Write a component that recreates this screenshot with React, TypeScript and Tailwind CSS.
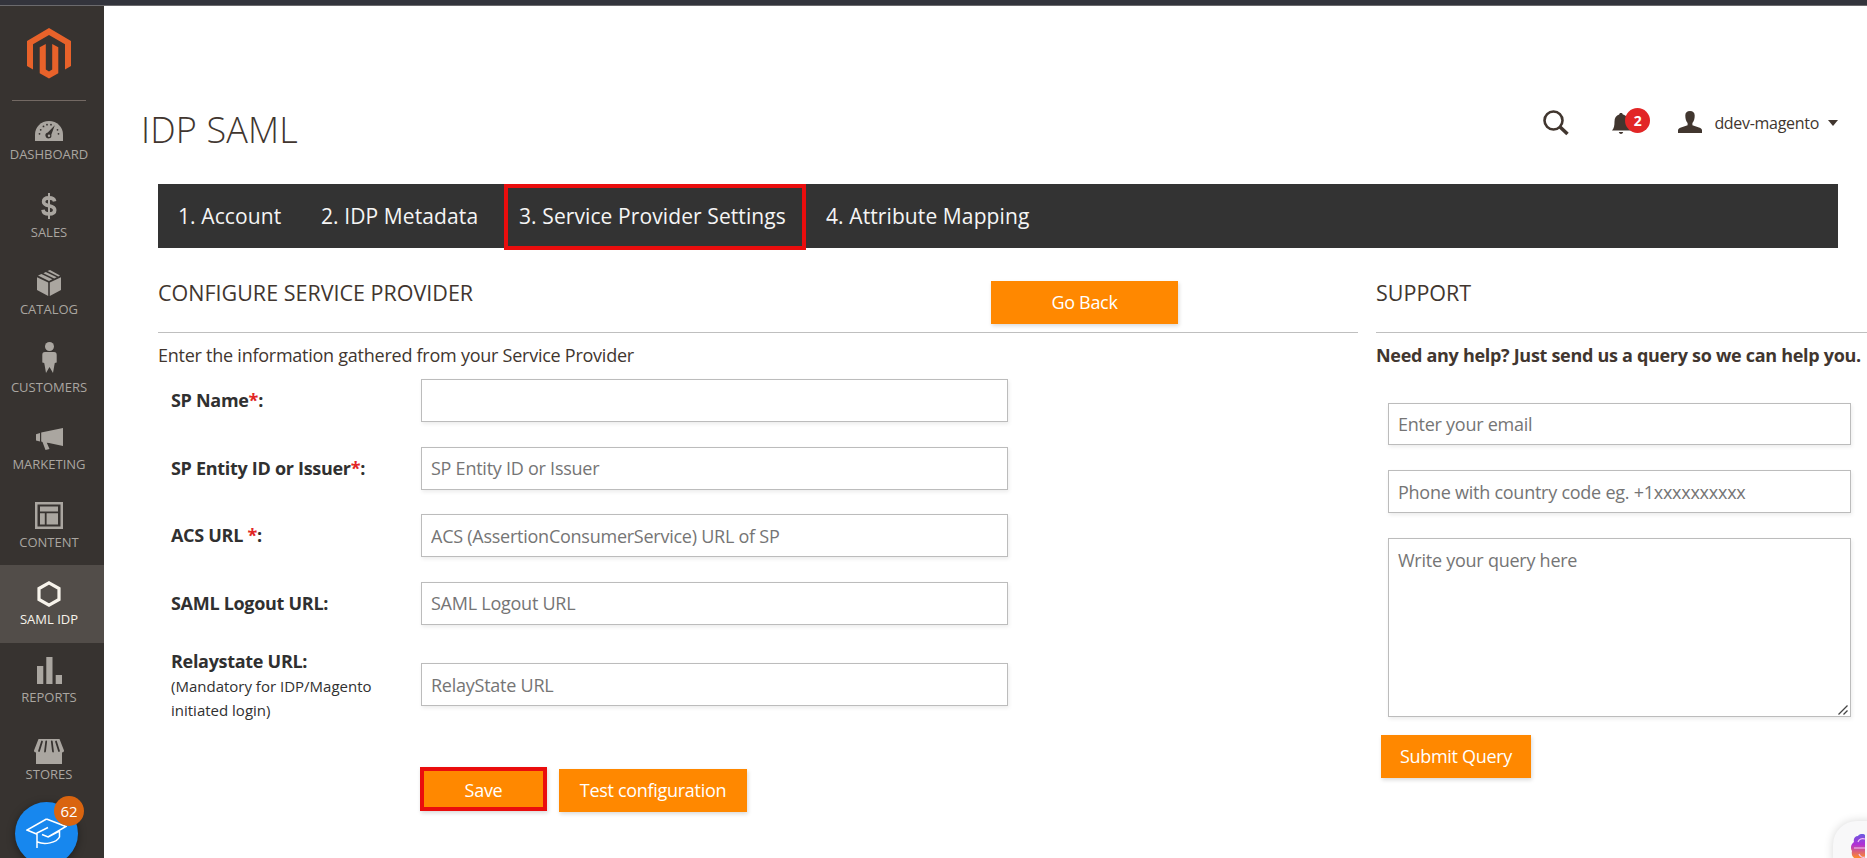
import type { ReactNode } from "react";

function MagentoLogo() {
  return (
    <svg width="44" height="51" viewBox="0 0 44 51" fill="#e8622a">
      <path d="M22 0 44 13v25l-6 3.4V16.2L22 7 6 16.2v25.2L0 38V13z" />
      <path d="M12.7 19.3 18.8 16v25.6L22 43.6l3.2-2V16l6.1 3.3v26L22 50.6l-9.3-5.3z" />
    </svg>
  );
}

function DashboardIcon() {
  return (
    <svg className="relative top-[2px]" width="28" height="20" viewBox="0 0 28 20" fill="currentColor">
      <path d="M14 0C6 0 0 6 0 13.5V20h28v-6.500C28 6 22 0 14 0z" />
      <g fill="#373330">
        <circle cx="4.500" cy="12.800" r="0.900" />
        <circle cx="5.700" cy="8.800" r="0.900" />
        <circle cx="8.500" cy="5.400" r="0.900" />
        <circle cx="12" cy="3.700" r="0.900" />
        <circle cx="16" cy="3.700" r="0.900" />
        <circle cx="22.500" cy="8.800" r="0.900" />
        <circle cx="23.500" cy="12.800" r="0.900" />
        <path d="M19.800 4.200 12.800 11.500a3 3 0 1 0 3.500 2.200z" />
      </g>
      <circle cx="14" cy="14.700" r="1.200" />
    </svg>
  );
}

function SalesIcon() {
  return (
    <svg className="relative -top-[1px]" width="16" height="26" viewBox="0 0 16 26" fill="none" stroke="currentColor">
      <path
        strokeWidth="3.600"
        d="M13.600 8.400C13.200 6 11.200 4.900 8 4.900c-3.300 0-5.400 1.300-5.400 3.800C2.600 14.500 13.700 11 13.700 17c0 2.700-2.300 4-5.700 4-3.500 0-5.700-1.400-6-4.300"
      />
      <path strokeWidth="2" d="M8 0v26" />
    </svg>
  );
}

function CatalogIcon() {
  return (
    <svg className="relative -top-[1px]" width="24" height="26" viewBox="0 0 24 26" fill="currentColor">
      <path d="M0 7.300 11.200 12.500V26L0 20zM24 7.300 12.800 12.500V26L24 20z" />
      <path d="M1 5.600 4.400 4.100 15.300 9.200 12 10.900zM6.400 3.200 8.800 2 19.700 7.200 17.200 8.400zM10.500 1.100 13 0l10 5.600-1.700.8z" />
    </svg>
  );
}

function CustomersIcon() {
  return (
    <svg className="relative -top-[4px]" width="15" height="31" viewBox="0 0 15 31" fill="currentColor">
      <circle cx="7.500" cy="4.500" r="4.500" />
      <path d="M3 10h9c2 0 2.700 1.200 2.700 3v7.500l-1.900.4-.5 2.600L11 31l-3.500-6L4 31l-1.300-7.500-.5-2.600-1.900-.4V13c0-1.800.7-3 2.700-3z" />
    </svg>
  );
}

function MarketingIcon() {
  return (
    <svg width="27" height="22" viewBox="0 0 27 22" fill="currentColor">
      <path d="M0 6.200 4 5v8.500L0 12.400zM5.200 4.600 27 0v18l-14-3-2.200-.300 2.700 6.300-4 1-3-8-1.300-.5z" />
    </svg>
  );
}

function ContentIcon() {
  return (
    <svg className="relative -top-[1px]" width="28" height="27" viewBox="0 0 28 27" fill="currentColor">
      <path fillRule="evenodd" d="M0 0h28v27H0zM2.500 2.500v22h23v-22z" />
      <path d="M5 4.500h18v5H5zM5 11.300h4.800V22.500H5zM11.600 11.300H23V22.500H11.600z" />
    </svg>
  );
}

function HexagonIcon() {
  return (
    <svg width="24" height="26" viewBox="0 0 24 26" fill="none" stroke="currentColor" strokeWidth="3.200">
      <path d="M12 1.900 22 7.500v11L12 24.100 2 18.500v-11z" />
    </svg>
  );
}

function ReportsIcon() {
  return (
    <svg className="relative -top-[1px]" width="25" height="27" viewBox="0 0 25 27" fill="currentColor">
      <path d="M0 9h6.300v18H0zM9.300 0h6.200v27H9.300zM18.700 18H25v9h-6.300z" />
    </svg>
  );
}

function StoresIcon() {
  return (
    <svg className="relative top-[2px]" width="30" height="25" viewBox="0 0 30 25" fill="currentColor">
      <path d="M4.500 0h21L30 11.500c0 1.200-.7 2-2 2V25H2V13.500c-1.300 0-2-.8-2-2z" />
      <path
        d="M8 2.500 5 12M12.200 2.500 11 12.500M17.800 2.500 19 12.500M22 2.500 25 12"
        stroke="#373330"
        strokeWidth="1.800"
        strokeLinecap="round"
      />
    </svg>
  );
}

const menu: { label: string; icon: ReactNode; active?: boolean }[] = [
  { label: "DASHBOARD", icon: <DashboardIcon /> },
  { label: "SALES", icon: <SalesIcon /> },
  { label: "CATALOG", icon: <CatalogIcon /> },
  { label: "CUSTOMERS", icon: <CustomersIcon /> },
  { label: "MARKETING", icon: <MarketingIcon /> },
  { label: "CONTENT", icon: <ContentIcon /> },
  { label: "SAML IDP", icon: <HexagonIcon />, active: true },
  { label: "REPORTS", icon: <ReportsIcon /> },
  { label: "STORES", icon: <StoresIcon /> },
];

function Sidebar() {
  return (
    <aside className="relative flex w-[104px] shrink-0 flex-col bg-[#373330]">
      <div className="flex h-[94px] flex-col items-center pr-[6px] pt-[22px]">
        <MagentoLogo />
      </div>
      <div className="ml-3 h-px w-[74px] shrink-0 bg-[#736963]" />
      <nav className="-mt-px">
        {menu.map((item) => (
          <a
            key={item.label}
            href="#"
            className={
              item.active
                ? "flex h-[77.5px] flex-col items-center bg-[#524d49] pr-[6px] pt-[11px] text-[#f7f3eb]"
                : "flex h-[77.5px] flex-col items-center pr-[6px] pt-[11px] text-[#aaa6a0]"
            }
          >
            <span className="flex h-[36px] items-center justify-center">{item.icon}</span>
            <span className="-mt-1 text-[13px] leading-[22px]">{item.label}</span>
          </a>
        ))}
      </nav>

      <div className="absolute left-[15px] top-[796px] flex h-[63px] w-[63px] items-center justify-center rounded-full bg-[#1787ee] shadow-[0_2px_8px_rgba(0,0,0,0.4)]">
        <svg width="41" height="32" viewBox="0 0 41 32" fill="none" stroke="white" strokeWidth="1.500">
          <path d="M20.500 1 40 8.500 22 19l-6-2.500M20.500 1 1 12l9.500 4M22 9.500 11 15v15M33.500 13v6c-3 6-15 8-22 5M22 19l11.500-6" />
        </svg>
      </div>
      <div className="absolute left-[54px] top-[790px] flex h-[30px] w-[30px] items-center justify-center rounded-full bg-[#d9640f] text-[15px] text-white">
        62
      </div>
    </aside>
  );
}

function Header() {
  return (
    <header className="flex h-[178px] items-start justify-between pl-[37px] pr-[29px]">
      <h1 className="mt-[99px] text-[36px] font-light leading-[50px] tracking-[0.15px] text-[#41362f]">IDP SAML</h1>
      <div className="mt-[101px] flex h-8 items-center text-[#41362f]">
        <svg width="26" height="26" viewBox="0 0 26 26" fill="none" stroke="currentColor">
          <circle cx="10.500" cy="10.500" r="9" strokeWidth="2.600" />
          <path d="M16.800 16.800 24.500 24" strokeWidth="3.600" />
        </svg>
        <div className="relative ml-[43px] w-[38px]">
          <svg width="20" height="21" viewBox="0 0 20 21" fill="currentColor">
            <path d="M9 0c1.200 0 1.800.7 1.800 1.500C14.200 2.200 16 5 16 8.500c0 4 1 7 3 9H0c2-2 2.500-5 2.500-9 0-3.500 1.600-6.300 4.700-7C7.200.7 7.800 0 9 0zM6.800 19h4.400c-.4 1.300-1.200 2-2.200 2s-1.800-.7-2.200-2z" />
          </svg>
          <span className="absolute -top-[5px] left-[13px] flex h-[25px] w-[25px] items-center justify-center rounded-full bg-[#e22626] text-[14px] font-bold text-white">
            2
          </span>
        </div>
        <svg className="-mt-[2px] ml-[28px]" width="24" height="22" viewBox="0 0 24 22" fill="currentColor">
          <path d="M12 0c3 0 4.700 1.500 4.700 4.500 0 3.500-.7 5.500-2.300 7.500v2.200l6.600 2.300c2 .7 3 1.500 3 3V22H0v-2.500c0-1.500 1-2.300 3-3l6.600-2.300V12C8 10 7.300 8 7.300 4.500 7.300 1.500 9 0 12 0z" />
        </svg>
        <span className="ml-3 text-[16px] tracking-[-0.3px]">ddev-magento</span>
        <svg className="ml-[9px]" width="10" height="6" viewBox="0 0 10 6" fill="currentColor">
          <path d="M0 0h10L5 6z" />
        </svg>
      </div>
    </header>
  );
}

function Tabs() {
  return (
    <div className="ml-[54px] mr-[29px] flex h-16 bg-[#333333] text-[21px] leading-[65px] tracking-[0.1px] text-[#f5f5f5]">
      <a href="#" className="ml-5 w-[143px]">1. Account</a>
      <a href="#" className="w-[183px]">2. IDP Metadata</a>
      <a
        href="#"
        className="h-[66px] w-[302px] border-4 border-[#ea0d0d] pl-[11px] leading-[57px]"
      >
        3. Service Provider Settings
      </a>
      <a href="#" className="ml-5">4. Attribute Mapping</a>
    </div>
  );
}

function Button({ children, className }: { children: ReactNode; className: string }) {
  return (
    <button
      className={`flex items-center justify-center bg-[#ff8800] text-[18px] tracking-[-0.3px] text-white shadow-[1px_2px_4px_rgba(0,0,0,0.15)] ${className}`}
    >
      {children}
    </button>
  );
}

const inputClass =
  "block border border-[#bcbcbc] bg-white px-[9px] text-[18px] tracking-[-0.25px] text-[#333] shadow-[1px_2px_4px_rgba(0,0,0,0.08)] outline-none placeholder:text-[#757575]";

const fields = [
  { id: "sp_name", label: "SP Name", required: true, placeholder: "" },
  { id: "sp_entity", label: "SP Entity ID or Issuer", required: true, placeholder: "SP Entity ID or Issuer" },
  { id: "acs_url", label: "ACS URL ", required: true, placeholder: "ACS (AssertionConsumerService) URL of SP" },
  { id: "logout_url", label: "SAML Logout URL", required: false, placeholder: "SAML Logout URL" },
];

function ProviderForm() {
  return (
    <section className="w-[1200px] shrink-0">
      <div className="flex h-[85px] border-b border-[#bfbfbf]">
        <h2 className="w-[833px] pt-[30px] text-[21.5px] font-medium leading-[30px]">
          CONFIGURE SERVICE PROVIDER
        </h2>
        <Button className="mt-[33px] h-[43px] w-[187px]">Go Back</Button>
      </div>
      <p className="pt-[9px] text-[18px] leading-[26px] tracking-[-0.25px]">
        Enter the information gathered from your Service Provider
      </p>
      <form className="pl-[13px] pt-[11px]">
        {fields.map((field) => (
          <div key={field.id} className="mb-[24.6px] flex h-[43px]">
            <label
              htmlFor={field.id}
              className="w-[250px] whitespace-pre text-[18px] font-bold leading-[42px] tracking-[-0.3px] text-[#303030]"
            >
              {field.label}
              {field.required && <span className="text-[#e22626]">*</span>}:
            </label>
            <input id={field.id} placeholder={field.placeholder} className={`h-[43px] w-[587px] ${inputClass}`} />
          </div>
        ))}
        <div className="flex h-[97px]">
          <label htmlFor="relaystate" className="w-[250px] pr-10 text-[#303030]">
            <b className="block text-[18px] font-bold leading-[25px] tracking-[-0.3px]">Relaystate URL:</b>
            <span className="block whitespace-nowrap text-[15px] leading-[24px]">
              (Mandatory for IDP/Magento
              <br />
              initiated login)
            </span>
          </label>
          <input
            id="relaystate"
            placeholder="RelayState URL"
            className={`mt-[14px] h-[43px] w-[587px] ${inputClass}`}
          />
        </div>
        <div className="ml-[249px] mt-[21px] flex items-start">
          <Button className="h-[44px] w-[127px] border-4 border-[#ea0d0d] pt-[2px]">Save</Button>
          <Button className="ml-3 mt-[2px] h-[43px] w-[188px]">Test configuration</Button>
        </div>
      </form>
    </section>
  );
}

function Support() {
  return (
    <section className="ml-[18px] w-[520px] shrink-0">
      <div className="h-[85px] border-b border-[#bfbfbf]">
        <h2 className="pt-[30px] text-[21.5px] font-medium leading-[30px]">SUPPORT</h2>
      </div>
      <p className="whitespace-nowrap pt-[9px] text-[18px] font-bold leading-[26px] tracking-[-0.3px]">
        Need any help? Just send us a query so we can help you.
      </p>
      <div className="pl-3 pt-[35px]">
        <input placeholder="Enter your email" className={`h-[42px] w-[463px] ${inputClass}`} />
        <input
          placeholder="Phone with country code eg. +1xxxxxxxxxx"
          className={`mt-[25px] h-[43px] w-[463px] ${inputClass}`}
        />
        <div className="relative mt-[25px] w-[463px]">
          <textarea
            placeholder="Write your query here"
            className={`h-[179px] w-[463px] resize-none py-[8px] leading-[26px] ${inputClass}`}
          />
          <svg
            className="absolute bottom-[2px] right-[3px]"
            width="10"
            height="10"
            viewBox="0 0 10 10"
            stroke="#444"
            strokeWidth="1.300"
          >
            <path d="M0.500 9.500 9.500 0.500M5.500 9.500l4-4" />
          </svg>
        </div>
      </div>
      <Button className="ml-[5px] mt-[18px] h-[43px] w-[150px]">Submit Query</Button>
    </section>
  );
}

function ChatWidget() {
  return (
    <div className="absolute left-[1833px] top-[821px] h-[60px] w-[60px] rounded-[24px] bg-[#f8f8f9] pl-[18px] pt-[13px] shadow-[0_0_10px_rgba(0,0,0,0.16)]">
      <svg width="30" height="32" viewBox="0 0 30 32">
        <defs>
          <linearGradient id="brain" x1="0" y1="0" x2="0" y2="1">
            <stop offset="0" stopColor="#6a5be0" />
            <stop offset="0.35" stopColor="#b02fd6" />
            <stop offset="0.8" stopColor="#ff8a2a" />
          </linearGradient>
        </defs>
        <path
          fill="url(#brain)"
          d="M14 1c-2-2-6-1-7 1-3 0-5 3-4 6-3 2-4 6-2 9-1 4 1 7 4 8 1 4 6 6 9 4z"
        />
        <path d="M14 5c-3-1-6 0-7 3M3 14h11M14 23c-2 1-5 0-6-3" stroke="#f3c5f5" strokeWidth="1.200" fill="none" />
      </svg>
    </div>
  );
}

export default function App() {
  return (
    <div className="relative flex h-[858px] w-full flex-col overflow-hidden bg-white font-['Open_Sans',sans-serif] text-[#41362f]">
      <div className="h-[6px] shrink-0 border-b border-[#6b6a6d] bg-[#33343c]" />
      <div className="flex min-h-0 flex-1">
        <Sidebar />
        <main className="min-w-0 flex-1">
          <Header />
          <Tabs />
          <div className="flex pl-[54px]">
            <ProviderForm />
            <Support />
          </div>
        </main>
      </div>
      <ChatWidget />
    </div>
  );
}
